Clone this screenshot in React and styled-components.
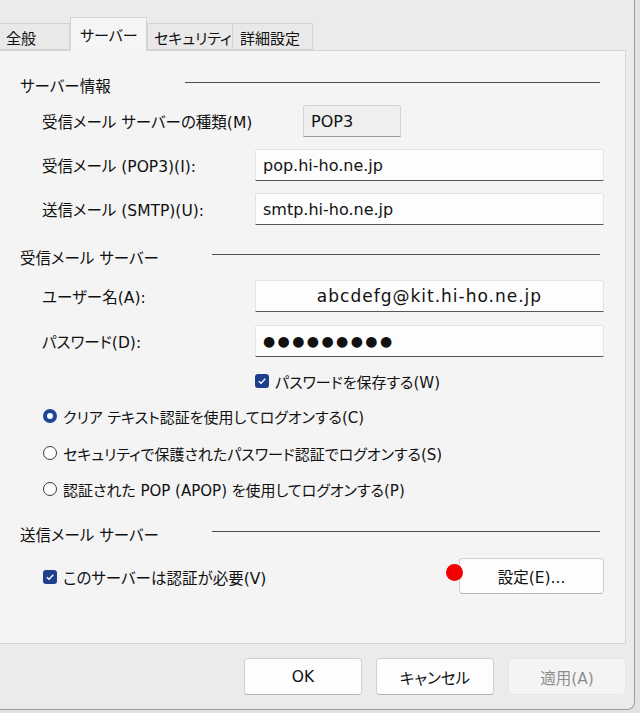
import React from "react";
import styled, { createGlobalStyle } from "styled-components";

const GlobalStyle = createGlobalStyle`
  html, body { margin: 0; padding: 0; background: #e2e2e2; }
  body {
    font-family: "DejaVu Sans", "Noto Sans CJK JP", sans-serif;
    color: #111111;
    font-feature-settings: "palt";
  }
  * { box-sizing: border-box; }
`;

const Window = styled.div`
  width: 635px;
  height: 710px;
  background: #ebebeb;
  border-right: 1px solid #9c9c9c;
  border-bottom: 1px solid #9c9c9c;
  border-bottom-right-radius: 8px;
  display: flex;
  flex-direction: column;
  overflow: hidden;
`;

const TabBar = styled.div`
  height: 50px;
  display: flex;
  align-items: flex-end;
  position: relative;
  z-index: 1;
`;

const Tab = styled.div`
  width: ${(p) => p.$w}px;
  height: ${(p) => (p.$active ? 34 : 27)}px;
  margin-bottom: ${(p) => (p.$active ? -1 : 0)}px;
  padding-left: ${(p) => p.$pl}px;
  display: flex;
  align-items: center;
  font-size: 15px;
  white-space: nowrap;
  background: ${(p) => (p.$active ? "#f5f5f5" : "#e9e9e9")};
  border: 1px solid #d4d4d4;
  border-bottom: ${(p) => (p.$active ? "none" : "1px solid #d4d4d4")};
  border-left-width: ${(p) => (p.$noLeft ? 0 : 1)}px;
  padding-top: ${(p) => (p.$active ? 0 : 1)}px;
`;

const Panel = styled.div`
  width: 626px;
  height: 594px;
  background: #f4f4f4;
  border: 1px solid #d4d4d4;
  border-left: none;
  padding: 22px 21px 0 20px;
  display: flex;
  flex-direction: column;
`;

const SectionHeader = styled.div`
  height: 24px;
  margin-top: ${(p) => p.$mt}px;
  display: flex;
  align-items: center;
  font-size: 15.5px;
`;

const SectionTitle = styled.div`
  width: ${(p) => p.$w}px;
  flex-shrink: 0;
  white-space: nowrap;
`;

const Rule = styled.div`
  flex: 1;
  height: 1px;
  margin: -5px 4px 0 0;
  background: #4d4d4d;
`;

const FieldRow = styled.div`
  height: 32px;
  margin-top: ${(p) => p.$mt}px;
  padding-left: 22px;
  display: flex;
  align-items: center;
`;

const Label = styled.div`
  width: ${(p) => p.$w}px;
  flex-shrink: 0;
  font-size: 15.5px;
  white-space: nowrap;
`;

const Input = styled.div`
  flex: ${(p) => (p.$w ? "0 0 auto" : 1)};
  width: ${(p) => (p.$w ? `${p.$w}px` : "auto")};
  height: 32px;
  display: flex;
  align-items: center;
  justify-content: ${(p) => (p.$center ? "center" : "flex-start")};
  padding-left: ${(p) => (p.$center ? 0 : 7)}px;
  font-size: ${(p) => p.$fs || 16}px;
  letter-spacing: ${(p) => p.$ls || 0}px;
  background: ${(p) => (p.$readonly ? "#efefef" : "#fdfdfd")};
  border: 1px solid ${(p) => (p.$readonly ? "#d2d2d2" : "#e3e3e3")};
  border-bottom: 1px solid ${(p) => (p.$readonly ? "#9a9a9a" : "#575757")};
  border-radius: 3px 3px 0 0;
  white-space: nowrap;
`;

const OptionRow = styled.div`
  height: 22px;
  margin-top: ${(p) => p.$mt}px;
  padding-left: ${(p) => p.$indent}px;
  display: flex;
  align-items: center;
  gap: 6px;
  font-size: 15px;
  white-space: nowrap;
`;

const CheckBox = styled.span`
  width: 14px;
  height: 14px;
  border-radius: 3px;
  background: #1d3f8e;
  display: inline-flex;
  align-items: center;
  justify-content: center;
  flex-shrink: 0;
`;

const Radio = styled.span`
  width: 14px;
  height: 14px;
  border-radius: 50%;
  flex-shrink: 0;
  background: ${(p) => (p.$on ? "#1d4596" : "#ffffff")};
  border: ${(p) => (p.$on ? "none" : "1px solid #3a3a3a")};
  display: inline-flex;
  align-items: center;
  justify-content: center;
  &::after {
    content: "";
    display: ${(p) => (p.$on ? "block" : "none")};
    width: 6px;
    height: 6px;
    border-radius: 50%;
    background: #ffffff;
  }
`;

const LastRow = styled.div`
  height: 36px;
  margin-top: 12px;
  padding-left: 23px;
  display: flex;
  align-items: center;
  justify-content: space-between;
`;

const CheckLabel = styled.div`
  display: flex;
  align-items: center;
  gap: 6px;
  font-size: 15.5px;
  margin-top: 2px;
`;

const Button = styled.div`
  position: relative;
  width: ${(p) => p.$w}px;
  height: ${(p) => p.$h}px;
  display: flex;
  align-items: center;
  justify-content: center;
  font-size: 15.5px;
  color: ${(p) => (p.$disabled ? "#8d8d8d" : "#111111")};
  background: ${(p) => (p.$disabled ? "#f4f4f4" : "#fdfdfd")};
  border: 1px solid ${(p) => (p.$disabled ? "#e6e6e6" : "#d0d0d0")};
  border-bottom-color: ${(p) => (p.$disabled ? "#e6e6e6" : "#b5b5b5")};
  border-radius: 4px;
`;

const Marker = styled.span`
  position: absolute;
  left: -14px;
  top: 5px;
  width: 17px;
  height: 17px;
  border-radius: 50%;
  background: #f20000;
`;

const Footer = styled.div`
  flex: 1;
  display: flex;
  justify-content: flex-end;
  align-items: flex-start;
  gap: 14px;
  padding: 14px 8px 0 0;
`;

const Check = () => (
  <svg width="10" height="10" viewBox="0 0 10 10">
    <path d="M1.8 5.2 L4 7.3 L8.3 2.8" fill="none" stroke="#fff" strokeWidth="1.3" />
  </svg>
);

export default function App() {
  return (
    <>
      <GlobalStyle />
      <Window>
        <TabBar>
          <Tab $w={70} $pl={6} $noLeft>全般</Tab>
          <Tab $w={77} $pl={9} $active>サーバー</Tab>
          <Tab $w={86} $pl={6}>セキュリティ</Tab>
          <Tab $w={80} $pl={7} $noLeft>詳細設定</Tab>
        </TabBar>
        <Panel>
          <SectionHeader $mt={0}>
            <SectionTitle $w={165}>サーバー情報</SectionTitle>
            <Rule />
          </SectionHeader>
          <FieldRow $mt={8}>
            <Label $w={261}>受信メール サーバーの種類(M)</Label>
            <Input $w={98} $readonly>POP3</Input>
          </FieldRow>
          <FieldRow $mt={12}>
            <Label $w={213}>受信メール (POP3)(I):</Label>
            <Input>pop.hi-ho.ne.jp</Input>
          </FieldRow>
          <FieldRow $mt={12}>
            <Label $w={213}>送信メール (SMTP)(U):</Label>
            <Input>smtp.hi-ho.ne.jp</Input>
          </FieldRow>

          <SectionHeader $mt={20}>
            <SectionTitle $w={192}>受信メール サーバー</SectionTitle>
            <Rule />
          </SectionHeader>
          <FieldRow $mt={11}>
            <Label $w={213}>ユーザー名(A):</Label>
            <Input $center $fs={17} $ls={1}>abcdefg@kit.hi-ho.ne.jp</Input>
          </FieldRow>
          <FieldRow $mt={13}>
            <Label $w={213}>パスワード(D):</Label>
            <Input $fs={14} $ls={2.4}>●●●●●●●●●</Input>
          </FieldRow>
          <OptionRow $mt={13} $indent={235}>
            <CheckBox><Check /></CheckBox>
            パスワードを保存する(W)
          </OptionRow>
          <OptionRow $mt={13} $indent={23}>
            <Radio $on />
            クリア テキスト認証を使用してログオンする(C)
          </OptionRow>
          <OptionRow $mt={15} $indent={23}>
            <Radio />
            セキュリティで保護されたパスワード認証でログオンする(S)
          </OptionRow>
          <OptionRow $mt={14} $indent={23}>
            <Radio />
            認証された POP (APOP) を使用してログオンする(P)
          </OptionRow>

          <SectionHeader $mt={22}>
            <SectionTitle $w={192}>送信メール サーバー</SectionTitle>
            <Rule />
          </SectionHeader>
          <LastRow>
            <CheckLabel>
              <CheckBox><Check /></CheckBox>
              このサーバーは認証が必要(V)
            </CheckLabel>
            <Button $w={145} $h={36}>
              <Marker />
              設定(E)...
            </Button>
          </LastRow>
        </Panel>
        <Footer>
          <Button $w={118} $h={37}>OK</Button>
          <Button $w={118} $h={37}>キャンセル</Button>
          <Button $w={118} $h={37} $disabled>適用(A)</Button>
        </Footer>
      </Window>
    </>
  );
}
